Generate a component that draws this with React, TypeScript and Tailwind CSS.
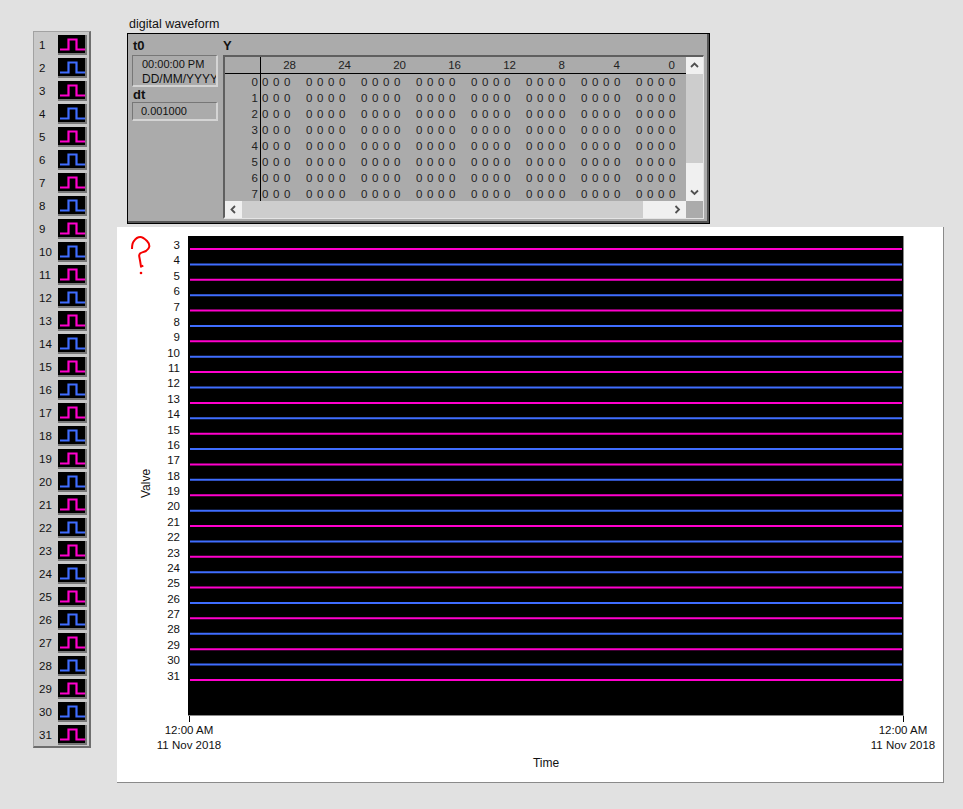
import React from 'react';

const PINK = '#ff00cc';
const BLUE = '#3f6dff';

const legendNums = Array.from({ length: 31 }, (_, i) => i + 1);
const valves = Array.from({ length: 29 }, (_, i) => i + 3);
const tableRows = [0, 1, 2, 3, 4, 5, 6, 7];
const groups = [0, 1, 2, 3, 4, 5, 6, 7];
const headers = ['28', '24', '20', '16', '12', '8', '4', '0'];

const Pulse = ({ color }: { color: string }) => (
  <svg width="27" height="18" viewBox="0 0 27 18" className="block">
    <path d="M2 14.5H10.5V4.5H18.5V14.5H27" fill="none" stroke={color} strokeWidth="2.2" />
  </svg>
);

const Chevron = ({ dir }: { dir: 'up' | 'down' | 'left' | 'right' }) => {
  const d = {
    up: 'M1 5L4.5 1.5L8 5',
    down: 'M1 1.5L4.5 5L8 1.5',
    left: 'M5 1L1.5 4.5L5 8',
    right: 'M1.5 1L5 4.5L1.5 8',
  }[dir];
  const horizontal = dir === 'left' || dir === 'right';
  return (
    <svg width={horizontal ? 7 : 9} height={horizontal ? 9 : 7} viewBox={horizontal ? '0 0 7 9' : '0 0 9 7'}>
      <path d={d} fill="none" stroke="#505050" strokeWidth="1.8" />
    </svg>
  );
};

const Legend = () => (
  <div className="ml-[33px] mt-[31px] flex h-[717px] w-[58px] flex-col border border-b-2 border-r-2 border-[#a2a2a2] border-b-[#6e6e6e] border-r-[#6e6e6e] bg-[#c9c9c9] pt-[3px]">
    {legendNums.map((n) => (
      <div key={n} className="flex h-[23px] shrink-0 items-start">
        <span className="mt-[1px] w-[24px] pl-[5px] text-[11.5px] leading-[18px] text-[#111]">{n}</span>
        <div className="border-b-[2px] border-r-[2px] border-[#777] bg-black">
          <Pulse color={n % 2 === 1 ? PINK : BLUE} />
        </div>
      </div>
    ))}
  </div>
);

const SunkenBox = ({ children, className }: { children: React.ReactNode; className: string }) => (
  <div className={`w-[86px] overflow-hidden whitespace-nowrap border border-b-2 border-r-2 border-[#777] border-b-[#d4d4d4] border-r-[#d4d4d4] text-[11px] leading-[15px] text-[#111] ${className}`}>
    {children}
  </div>
);

const TableGrid = () => (
  <div className="flex h-[144px] w-[461px] overflow-hidden text-[11.5px] text-[#222]">
    <div className="w-[36px] shrink-0 border-r border-black">
      <div className="h-[17px] border-b border-black" />
      {tableRows.map((r) => (
        <div key={r} className="h-[16px] pr-[2px] text-right leading-[16px]">{r}</div>
      ))}
    </div>
    <div className="flex-1 overflow-hidden">
      <div className="flex h-[17px] border-b border-black">
        <div className="-ml-[10px] flex">
          {headers.map((h) => (
            <div key={h} className={`h-[16px] w-[55px] shrink-0 text-right leading-[16px] ${h.length === 2 ? 'pr-[10px]' : 'pr-[16px]'}`}>{h}</div>
          ))}
        </div>
      </div>
      {tableRows.map((r) => (
        <div key={r} className="-ml-[10px] flex h-[16px] leading-[16px]">
          {groups.map((g) => (
            <div key={g} className="flex w-[55px] shrink-0">
              {/* first group is scrolled, only three bits show */}
              <span className="w-[11px]">{g === 0 ? '' : '0'}</span>
              <span className="w-[11px]">0</span>
              <span className="w-[11px]">0</span>
              <span className="w-[11px]">0</span>
            </div>
          ))}
        </div>
      ))}
    </div>
  </div>
);

const WaveformPanel = () => (
  <div className="ml-[10px] h-[191px] w-[583px] border border-black">
    <div className="flex h-full border-b-[2px] border-r-[2px] border-[#555] bg-[#ababab] text-[#111]">
      <div className="w-[95px] pl-[4px] pt-[4px]">
        <div className="h-[17px] pl-[1px] text-[13px] font-bold leading-[16px]">t0</div>
        <SunkenBox className="h-[32px] pl-[9px] pt-[1px]">
          <div>00:00:00 PM</div>
          <div className="text-[12px]">DD/MM/YYYY</div>
        </SunkenBox>
        <div className="mt-[1px] h-[14px] pl-[1px] text-[13px] font-bold leading-[14px]">dt</div>
        <SunkenBox className="h-[19px] pl-[8px] pt-[1px]">0.001000</SunkenBox>
      </div>
      <div className="flex flex-col pt-[4px]">
        <div className="h-[17px] text-[13px] font-bold leading-[16px]">Y</div>
        <div className="h-[164px] w-[481px] border-l-[2px] border-t-[2px] border-b-[2px] border-r-[1px] border-[#5f5f5f] border-b-[#e4e4e4] border-r-[#e4e4e4]">
          <div className="flex">
            <TableGrid />
            <div className="flex h-[144px] w-[17px] flex-col bg-[#f0f0f0]">
              <div className="flex h-[17px] items-center justify-center"><Chevron dir="up" /></div>
              <div className="h-[89px] bg-[#cdcdcd]" />
              <div className="flex-1" />
              <div className="flex h-[17px] items-center justify-center"><Chevron dir="down" /></div>
            </div>
          </div>
          <div className="flex h-[17px] bg-[#f0f0f0]">
            <div className="flex w-[17px] items-center justify-center"><Chevron dir="left" /></div>
            <div className="w-[401px] bg-[#cdcdcd]" />
            <div className="flex-1" />
            <div className="flex w-[17px] items-center justify-center"><Chevron dir="right" /></div>
            <div className="w-[17px] bg-[#ababab]" />
          </div>
        </div>
      </div>
    </div>
  </div>
);

const Traces = () => (
  <svg width="714" height="479" viewBox="0 0 714 479" className="block">
    {valves.map((v, i) => (
      <line key={v} x1="2" x2="714" y1={13 + i * 15.39} y2={13 + i * 15.39} stroke={v % 2 === 1 ? PINK : BLUE} strokeWidth="2" />
    ))}
  </svg>
);

const AxisLabel = () => (
  <div className="flex w-[64px] flex-col items-center text-[11.5px] leading-[14.5px] text-[#111]">
    <div className="h-[6px] w-px bg-black" />
    <div className="mt-[1px] whitespace-nowrap">12:00 AM</div>
    <div className="whitespace-nowrap">11 Nov 2018</div>
  </div>
);

const Graph = () => (
  <div className="relative mt-[3px] h-[556px] w-[827px] border-b border-r border-[#8a8a8a] bg-white pt-[9px]">
    <svg width="30" height="50" viewBox="0 0 30 50" className="absolute left-[12px] top-[7px]">
      <path d="M3 15C3 10 4 8 5 7C7 4 9 3 11.3 3C14 3 16 5 18 7C20 9 20.5 11 20.3 12.7C20 15 18.5 16 17 17C15 18 12.5 18.5 11.3 19.3C10 20.5 10 21.5 10.3 22.7C11 26 11.5 29 12 32.7L14.3 31.7" fill="none" stroke="#f60000" strokeWidth="2" strokeLinejoin="round" />
      <circle cx="12" cy="39" r="1.3" fill="#f60000" />
    </svg>
    <div className="flex h-[480px]">
      <div className="flex w-[71px] shrink-0">
        <span className="ml-[21px] mt-[231px] h-[32px] w-[16px] rotate-180 whitespace-nowrap text-center text-[12px] leading-[16px] text-[#111] [writing-mode:vertical-rl]">Valve</span>
        <div className="ml-[5px] mt-[2px] grid w-[23px] auto-rows-[15.39px] pr-[2px] text-right text-[11.5px] leading-[15.39px] text-[#111]">
          {valves.map((v) => (
            <div key={v}>{v}</div>
          ))}
        </div>
      </div>
      <div className="h-[480px] w-[716px] border-b border-r border-[#8a8a8a] bg-black">
        <Traces />
      </div>
    </div>
    <div className="ml-[40px] flex w-[778px] justify-between">
      <AxisLabel />
      <AxisLabel />
    </div>
    <div className="ml-[71px] mt-[4px] w-[716px] text-center text-[12px] leading-[15px] text-[#111]">Time</div>
  </div>
);

export default function App() {
  return (
    <div className="flex h-[809px] w-[963px] overflow-hidden bg-[#e1e1e1] font-['Liberation_Sans',Arial,sans-serif]">
      <Legend />
      <div className="ml-[26px] flex flex-col">
        <div className="ml-[12px] mt-[17px] h-[16px] text-[12.5px] leading-[15px] text-[#111]">digital waveform</div>
        <WaveformPanel />
        <Graph />
      </div>
    </div>
  );
}
